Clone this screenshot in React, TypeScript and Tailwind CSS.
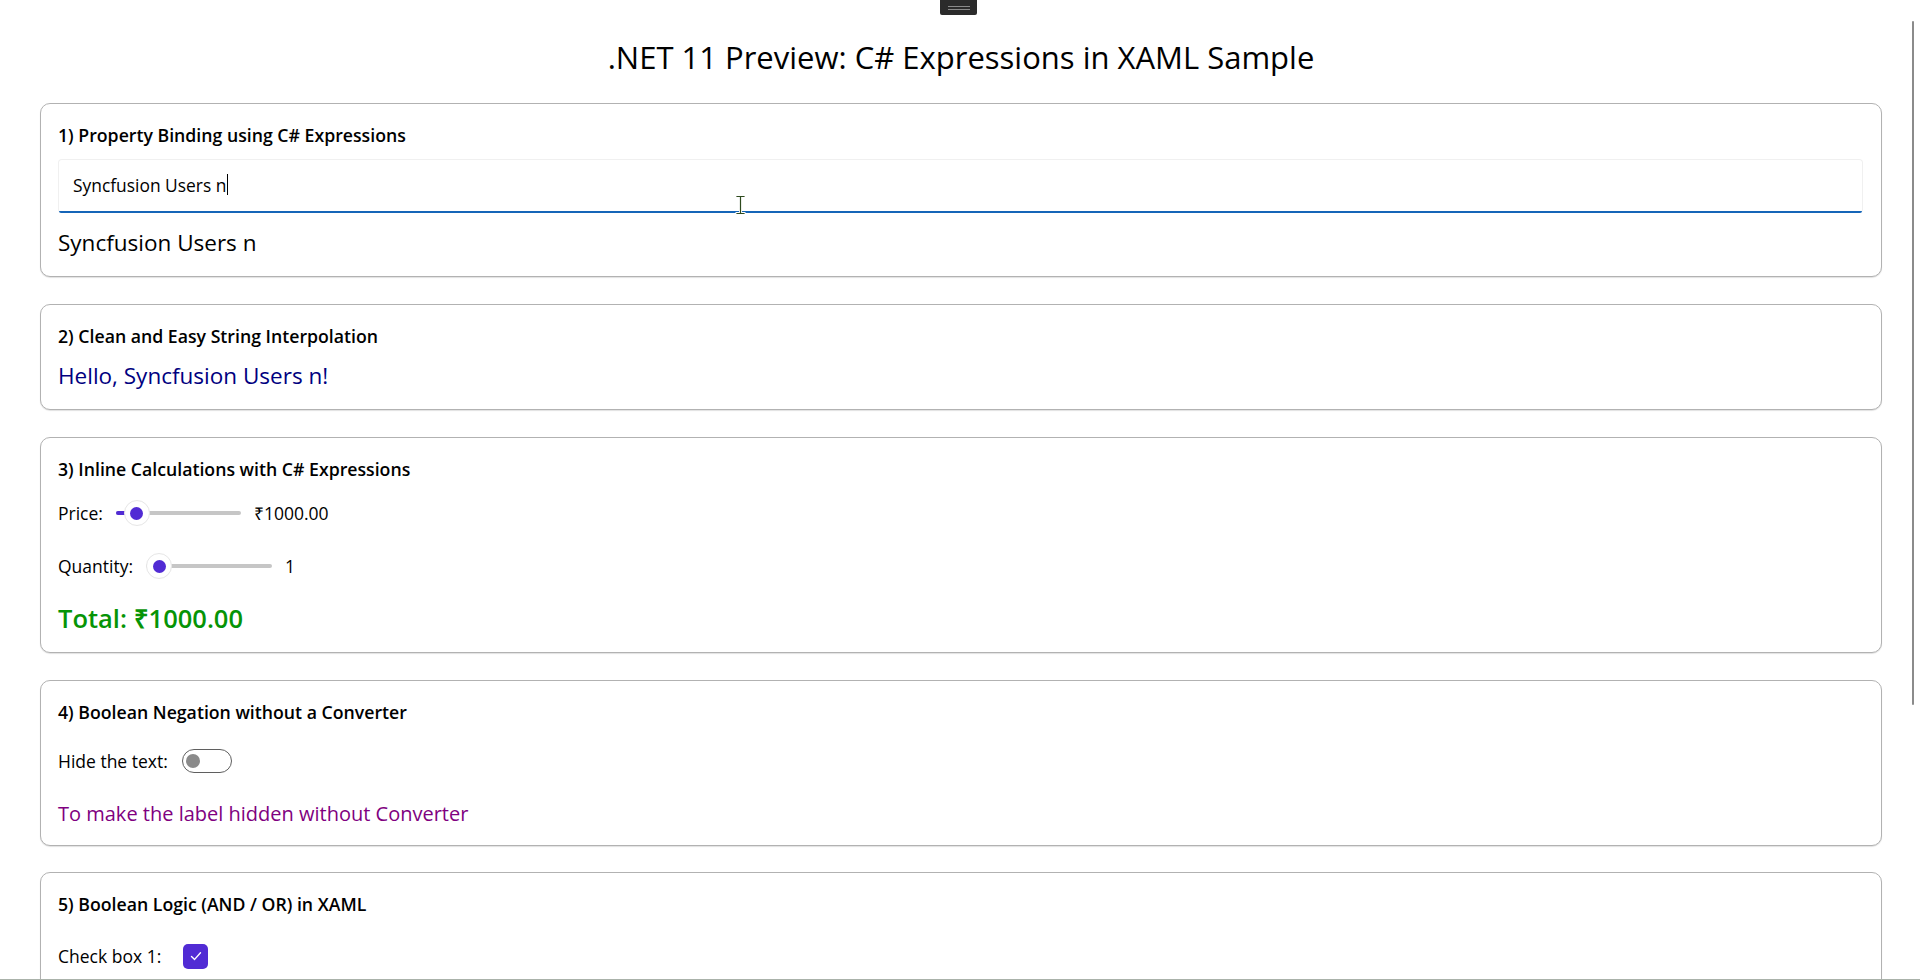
import React from "react";

function Slider({ offset, width }: { offset: number; width: number }) {
  return (
    <div className="relative h-[28px] shrink-0" style={{ width }}>
      <div className="absolute left-0 right-0 top-[12px] h-[4px] rounded-full bg-[#c6c6c6]" />
      {offset > 0 && (
        <div
          className="absolute left-0 top-[12px] h-[4px] rounded-full bg-[#512bd4]"
          style={{ width: offset + 4 }}
        />
      )}
      <div
        className="absolute top-[1px] flex h-[26px] w-[26px] items-center justify-center rounded-full border border-[#e6e6e6] bg-white"
        style={{ left: offset }}
      >
        <div className="h-[13px] w-[13px] rounded-full bg-[#512bd4]" />
      </div>
    </div>
  );
}

function Card({ children, className = "" }: { children: React.ReactNode; className?: string }) {
  return (
    <div
      className={
        "rounded-[10px] border border-[#b2b2b2] bg-white pl-[17px] pr-[18px] pt-[19px] shadow-[0_1px_1px_rgba(0,0,0,0.12)] " +
        className
      }
    >
      {children}
    </div>
  );
}

function Header({ children }: { children: React.ReactNode }) {
  return <div className="text-[17.7px] font-semibold leading-[24px] text-black">{children}</div>;
}

export default function App() {
  return (
    <div className="relative box-border h-[980px] w-[1920px] overflow-hidden border-b border-[#aab2aa] bg-white font-['Open_Sans',sans-serif] text-black">
      {/* top drag tab */}
      <div className="absolute left-[940px] top-0 flex h-[15px] w-[37px] flex-col items-center justify-center gap-[2px] rounded-b-[2px] bg-[#2b2b2b]">
        <div className="h-px w-[22px] bg-[#8a8a8a]" />
        <div className="h-px w-[22px] bg-[#8a8a8a]" />
      </div>
      {/* overlay scrollbar */}
      <div className="absolute left-[1912px] top-[21px] h-[684px] w-[2px] rounded-full bg-[#8b8b8b]" />

      <div className="pl-[40px] pr-[38px]">
        <h1 className="pt-[36px] text-center text-[31px] font-normal leading-[42px]">
          .NET 11 Preview: C# Expressions in XAML Sample
        </h1>

        {/* 1 */}
        <Card className="mt-[25px] pb-[18px]">
          <Header>1) Property Binding using C# Expressions</Header>
          <div className="relative mt-[12px] box-border flex h-[54px] items-center rounded-[4px] border border-b-0 border-[#f0f0f0] bg-white pb-[4px] pl-[14px]">
            <span className="text-[17.4px] leading-[24px]">Syncfusion Users n</span>
            <span className="ml-px h-[21px] w-px bg-black" />
            <div className="absolute bottom-0 left-0 right-0 h-[2px] rounded-b-[4px] bg-[#1565b8]" />
          </div>
          <div className="mt-[15px] text-[22.5px] leading-[30px]">Syncfusion Users n</div>
        </Card>

        {/* 2 */}
        <Card className="mt-[26.5px] pb-[18px]">
          <Header>2) Clean and Easy String Interpolation</Header>
          <div className="mt-[13px] text-[22.5px] leading-[30px] text-[#000080]">Hello, Syncfusion Users n!</div>
        </Card>

        {/* 3 */}
        <Card className="mt-[27.5px] pb-[17px]">
          <Header>3) Inline Calculations with C# Expressions</Header>
          <div className="mt-[18px] flex h-[28px] items-center gap-[13px] text-[17.5px]">
            <span>Price:</span>
            <Slider offset={8} width={125} />
            <span>₹1000.00</span>
          </div>
          <div className="mt-[25px] flex h-[28px] items-center gap-[13px] text-[17.5px]">
            <span>Quantity:</span>
            <Slider offset={0} width={126} />
            <span>1</span>
          </div>
          <div className="mt-[21px] text-[25.5px] font-semibold leading-[34px] text-[#069406]">Total: ₹1000.00</div>
        </Card>

        {/* 4 */}
        <Card className="mt-[27px] pb-[17px]">
          <Header>4) Boolean Negation without a Converter</Header>
          <div className="mt-[23px] flex h-[28px] items-center gap-[14px] text-[17.5px]">
            <span>Hide the text:</span>
            <div className="box-border flex h-[24px] w-[50px] items-center rounded-full border-[1.5px] border-[#5f5f5f] bg-white pl-[3.5px]">
              <div className="h-[14px] w-[14px] rounded-full bg-[#8a8a8a]" />
            </div>
          </div>
          <div className="mt-[25px] text-[20px] leading-[28px] text-[#800080]">To make the label hidden without Converter</div>
        </Card>

        {/* 5 */}
        <Card className="mt-[26px] h-[200px]">
          <Header>5) Boolean Logic (AND / OR) in XAML</Header>
          <div className="mt-[26px] flex h-[28px] items-center text-[17.5px]">
            <span>Check box 1:</span>
            <div className="ml-[22px] flex h-[25px] w-[25px] items-center justify-center rounded-[5px] bg-[#512bd4]">
              <svg width="14" height="14" viewBox="0 0 14 14" fill="none">
                <path d="M2.5 7.5 L5.6 10.4 L11.5 3.8" stroke="white" strokeWidth="1.4" strokeLinecap="round" strokeLinejoin="round" />
              </svg>
            </div>
          </div>
        </Card>
      </div>

      {/* mouse I-beam cursor */}
      <svg className="absolute left-[735px] top-[195px]" width="11" height="20" viewBox="0 0 11 20">
        <path d="M2 1.5 H9 M5.5 1.5 V18.5 M2 18.5 H9" stroke="#ffffff" strokeWidth="3" strokeLinecap="square" />
        <path d="M2 1.5 H9 M5.5 1.5 V18.5 M2 18.5 H9" stroke="#2e4a1e" strokeWidth="1.2" strokeLinecap="square" />
      </svg>
    </div>
  );
}
